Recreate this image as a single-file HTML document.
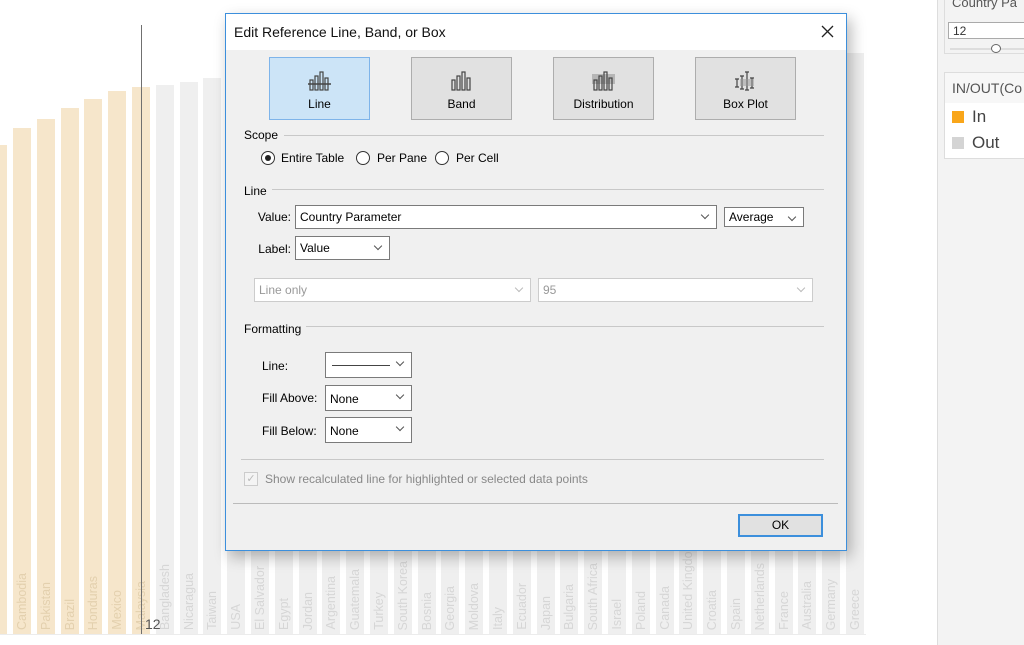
<!DOCTYPE html>
<html><head><meta charset="utf-8"><style>
*{box-sizing:border-box;margin:0;padding:0}
body{width:1024px;height:645px;overflow:hidden;background:#fff;font-family:"Liberation Sans",sans-serif;position:relative}
.b{position:absolute;width:18px;bottom:11px;background:#efefef}
.b.o{background:#f6e6cb}
.b span{position:absolute;bottom:4px;left:2px;writing-mode:vertical-rl;transform:rotate(180deg);font-size:12.5px;color:#d6d6d6;white-space:nowrap}
.b.o span{color:#e3d0ae}
.dlg{position:absolute;left:225px;top:13px;width:622px;height:538px;border:1px solid #3c8fdc;background:#f0f0f0;box-shadow:4px 6px 14px rgba(0,0,0,.28);font-size:12px;color:#000}
.tt{position:absolute;left:0;top:0;right:0;height:36px;background:#fff;font-size:14px;padding:10px 0 0 8px;color:#111}
.x{position:absolute;right:12px;top:11px}
.tb{position:absolute;top:43px;width:101px;height:63px;background:#e1e1e1;border:1px solid #adadad;text-align:center;font-size:12px}
.tb.s{background:#cce4f7;border-color:#7eb4ea}
.tb svg{margin-top:12px}
.tb div{margin-top:2px}
.a{position:absolute}
.r{position:absolute;text-align:right}
.hl{position:absolute;height:1px;background:#c8c8c8}
.sel{position:absolute;background:#fff;border:1px solid #7a7a7a;height:24px;font-size:12px;padding:4px 0 0 4px}
.sel:after{content:"";position:absolute;right:8px;top:6px;width:5px;height:5px;border-right:1px solid #555;border-bottom:1px solid #555;transform:rotate(45deg)}
.sel.d{border-color:#ccc;color:#999}
.sel.d:after{border-color:#bbb}
.rad{position:absolute;width:14px;height:14px;border:1px solid #333;border-radius:50%;background:#fff}
</style></head><body>

<div class="b o" style="left:0;width:7px;top:145px"></div>
<div class="b o" style="left:13px;top:128px"><span>Cambodia</span></div>
<div class="b o" style="left:37px;top:119px"><span>Pakistan</span></div>
<div class="b o" style="left:61px;top:108px"><span>Brazil</span></div>
<div class="b o" style="left:84px;top:99px"><span>Honduras</span></div>
<div class="b o" style="left:108px;top:91px"><span>Mexico</span></div>
<div class="b o" style="left:132px;top:87px"><span>Malaysia</span></div>
<div class="b" style="left:156px;top:85px"><span>Bangladesh</span></div>
<div class="b" style="left:180px;top:82px"><span>Nicaragua</span></div>
<div class="b" style="left:203px;top:78px"><span>Taiwan</span></div>
<div class="b" style="left:227px;top:76px"><span>USA</span></div>
<div class="b" style="left:251px;top:74px"><span>El Salvador</span></div>
<div class="b" style="left:275px;top:73px"><span>Egypt</span></div>
<div class="b" style="left:299px;top:71px"><span>Jordan</span></div>
<div class="b" style="left:322px;top:70px"><span>Argentina</span></div>
<div class="b" style="left:346px;top:69px"><span>Guatemala</span></div>
<div class="b" style="left:370px;top:68px"><span>Turkey</span></div>
<div class="b" style="left:394px;top:67px"><span>South Korea</span></div>
<div class="b" style="left:418px;top:66px"><span>Bosnia</span></div>
<div class="b" style="left:441px;top:65px"><span>Georgia</span></div>
<div class="b" style="left:465px;top:64px"><span>Moldova</span></div>
<div class="b" style="left:489px;top:63px"><span>Italy</span></div>
<div class="b" style="left:513px;top:62px"><span>Ecuador</span></div>
<div class="b" style="left:537px;top:62px"><span>Japan</span></div>
<div class="b" style="left:560px;top:61px"><span>Bulgaria</span></div>
<div class="b" style="left:584px;top:60px"><span>South Africa</span></div>
<div class="b" style="left:608px;top:60px"><span>Israel</span></div>
<div class="b" style="left:632px;top:59px"><span>Poland</span></div>
<div class="b" style="left:656px;top:58px"><span>Canada</span></div>
<div class="b" style="left:679px;top:58px"><span>United Kingdom</span></div>
<div class="b" style="left:703px;top:57px"><span>Croatia</span></div>
<div class="b" style="left:727px;top:57px"><span>Spain</span></div>
<div class="b" style="left:751px;top:56px"><span>Netherlands</span></div>
<div class="b" style="left:775px;top:55px"><span>France</span></div>
<div class="b" style="left:798px;top:55px"><span>Australia</span></div>
<div class="b" style="left:822px;top:54px"><span>Germany</span></div>
<div class="b" style="left:846px;top:53px"><span>Greece</span></div>
<div class="a" style="left:0;top:634px;width:866px;height:1px;background:#ececec"></div>
<div class="a" style="left:141px;top:25px;width:1px;height:609px;background:#707070"></div>
<div class="a" style="left:145px;top:616px;font-size:14px;color:#555">12</div>

<div class="a" style="left:937px;top:0;width:87px;height:645px;background:#f3f3f3;border-left:1px solid #ddd"></div>
<div class="a" style="left:944px;top:-2px;width:82px;height:56px;border:1px solid #ddd;background:#f3f3f3"></div>
<div class="a" style="left:952px;top:-5px;font-size:13px;color:#555">Country Pa</div>
<div class="a" style="left:948px;top:22px;width:78px;height:17px;border:1px solid #aaa;background:#fff;font-size:12px;padding:1px 0 0 4px;color:#333">12</div>
<div class="a" style="left:950px;top:48px;width:76px;height:2px;background:#ddd"></div>
<div class="a" style="left:991px;top:44px;width:10px;height:9px;border:1px solid #666;border-radius:50%;background:#fff"></div>
<div class="a" style="left:944px;top:72px;width:82px;height:87px;border:1px solid #ddd;background:#fff"></div>
<div class="a" style="left:945px;top:73px;width:80px;height:30px;background:#f7f7f7"></div>
<div class="a" style="left:952px;top:80px;font-size:14px;color:#555">IN/OUT(Co</div>
<div class="a" style="left:952px;top:111px;width:12px;height:12px;background:#f9a61a"></div>
<div class="a" style="left:972px;top:107px;font-size:17px;color:#444">In</div>
<div class="a" style="left:952px;top:137px;width:12px;height:12px;background:#d4d4d4"></div>
<div class="a" style="left:972px;top:133px;font-size:17px;color:#444">Out</div>

<div class="dlg">
 <div class="tt">Edit Reference Line, Band, or Box<svg class="x" width="13" height="13" viewBox="0 0 13 13" stroke="#222" stroke-width="1.3"><path d="M1 1L12 12M12 1L1 12"/></svg></div>
 <div class="tb s" style="left:43px"><svg width="24" height="22" viewBox="0 0 24 22" fill="none" stroke="#444" stroke-width="1.2"><rect x="2" y="10" width="3" height="10"/><rect x="7" y="6" width="3" height="14"/><rect x="12" y="2" width="3" height="18"/><rect x="17" y="8" width="3" height="12"/><line x1="0" y1="14" x2="23" y2="14" stroke-width="1.6"/></svg><div>Line</div></div>
 <div class="tb" style="left:185px"><svg width="24" height="22" viewBox="0 0 24 22" fill="none" stroke="#444" stroke-width="1.2"><rect x="2" y="10" width="3" height="10"/><rect x="7" y="6" width="3" height="14"/><rect x="12" y="2" width="3" height="18"/><rect x="17" y="8" width="3" height="12"/></svg><div>Band</div></div>
 <div class="tb" style="left:327px"><svg width="24" height="22" viewBox="0 0 24 22" fill="none" stroke="#444" stroke-width="1.2"><rect x="0" y="4" width="23" height="10" fill="#999" stroke="none" opacity=".6"/><rect x="2" y="10" width="3" height="10"/><rect x="7" y="6" width="3" height="14"/><rect x="12" y="2" width="3" height="18"/><rect x="17" y="8" width="3" height="12"/></svg><div>Distribution</div></div>
 <div class="tb" style="left:469px"><svg width="24" height="22" viewBox="0 0 24 22" fill="none" stroke="#444" stroke-width="1.2"><path d="M3 9v8M1 9h4M1 17h4M8 6v13M6 6h4M6 19h4M13 2v18M11 2h4M11 20h4M18 8v10M16 8h4M16 18h4"/><rect x="6" y="9" width="14" height="7" fill="#999" stroke="none" opacity=".5"/></svg><div>Box Plot</div></div>

 <div class="a" style="left:18px;top:114px">Scope</div><div class="hl" style="left:58px;top:121px;width:540px"></div>
 <div class="rad" style="left:35px;top:137px"><div style="position:absolute;left:3px;top:3px;width:6px;height:6px;border-radius:50%;background:#222"></div></div>
 <div class="a" style="left:55px;top:137px">Entire Table</div>
 <div class="rad" style="left:130px;top:137px"></div><div class="a" style="left:151px;top:137px">Per Pane</div>
 <div class="rad" style="left:209px;top:137px"></div><div class="a" style="left:230px;top:137px">Per Cell</div>

 <div class="a" style="left:18px;top:170px">Line</div><div class="hl" style="left:46px;top:175px;width:552px"></div>
 <div class="r" style="left:20px;width:45px;top:196px">Value:</div>
 <div class="sel" style="left:69px;top:191px;width:422px">Country Parameter</div>
 <div class="sel" style="left:498px;top:193px;width:80px;height:20px;padding-top:2px">Average</div>
 <div class="r" style="left:20px;width:45px;top:228px">Label:</div>
 <div class="sel" style="left:69px;top:222px;width:95px">Value</div>
 <div class="sel d" style="left:28px;top:264px;width:277px">Line only</div>
 <div class="sel d" style="left:312px;top:264px;width:275px">95</div>

 <div class="a" style="left:18px;top:308px">Formatting</div><div class="hl" style="left:80px;top:312px;width:518px"></div>
 <div class="a" style="left:36px;top:345px">Line:</div>
 <div class="sel" style="left:99px;top:338px;width:87px;height:26px"><div style="position:absolute;left:6px;top:12px;width:58px;height:1px;background:#444"></div></div>
 <div class="a" style="left:36px;top:377px">Fill Above:</div>
 <div class="sel" style="left:99px;top:371px;width:87px;height:26px;padding-top:6px">None</div>
 <div class="a" style="left:36px;top:410px">Fill Below:</div>
 <div class="sel" style="left:99px;top:403px;width:87px;height:26px;padding-top:6px">None</div>
 <div class="hl" style="left:15px;top:445px;width:583px"></div>
 <div class="a" style="left:18px;top:458px;width:14px;height:14px;border:1px solid #ccc;background:#f4f4f4;color:#bbb;font-size:11px;text-align:center;line-height:13px">✓</div>
 <div class="a" style="left:39px;top:458px;color:#888">Show recalculated line for highlighted or selected data points</div>
 <div class="hl" style="left:7px;top:489px;width:605px;background:#bbb"></div>
 <div class="a" style="left:512px;top:500px;width:85px;height:23px;border:2px solid #3c8fdc;background:#e1e1e1;text-align:center;line-height:19px">OK</div>
</div>
</body></html>
